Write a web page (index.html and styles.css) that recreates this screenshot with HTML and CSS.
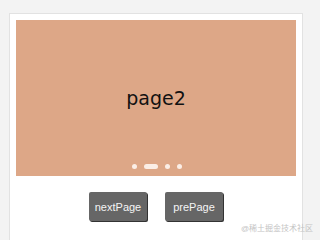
FILE: index.html
```html
<!DOCTYPE html>
<html lang="en">
  <head>
    <meta charset="UTF-8" />
    <meta name="viewport" content="width=device-width, initial-scale=1.0" />
    <title>Swiper</title>
    <link rel="stylesheet" href="styles.css">
  </head>
  <body>
    <div class="container">
      <div class="swiper">
        <span class="slide_text">page2</span>
        <div class="dots">
          <span class="dot"></span>
          <span class="dot active"></span>
          <span class="dot"></span>
          <span class="dot"></span>
        </div>
      </div>
      <div class="btns">
        <button type="button">nextPage</button>
        <button type="button">prePage</button>
      </div>
    </div>
    <span class="watermark">@稀土掘金技术社区</span>
  </body>
</html>
```

FILE: styles.css
```css
* {
  box-sizing: border-box;
  padding: 0;
  margin: 0;
  font-family: "Liberation Sans", "Noto Sans CJK SC", sans-serif;
}
body {
  height: 240px;
  overflow: hidden;
  background-color: #f3f3f3;
  padding: 13px 0 0 9px;
}
div.container {
  width: 294px;
  height: 227px;
  background-color: #fff;
  border: 1px solid #e2e2e2;
  border-bottom: none;
  padding: 6px;
}
.swiper {
  height: 156px;
  background-color: #dda787;
  position: relative;
  display: flex;
  align-items: center;
  justify-content: center;
}
.slide_text {
  font-family: "DejaVu Sans", sans-serif;
  font-size: 19px;
  color: #111;
}
.dots {
  position: absolute;
  left: 0;
  right: 0;
  bottom: 7px;
  display: flex;
  justify-content: center;
  align-items: center;
  gap: 7px;
  padding-left: 2px;
}
.dot {
  width: 5px;
  height: 5px;
  border-radius: 3px;
  background-color: #fbeee6;
}
.dot.active {
  width: 14px;
}
.btns {
  display: flex;
  justify-content: center;
  gap: 18px;
  margin-top: 16px;
}
button {
  width: 58px;
  height: 29px;
  border: none;
  background-color: #666;
  color: #f4f4f4;
  font-size: 11px;
  border-radius: 2px;
  box-shadow: 1px 1px 0 #333;
  cursor: pointer;
}
.watermark {
  position: absolute;
  right: 7px;
  bottom: 7px;
  font-size: 8px;
  color: #c4c4c4;
}
```
